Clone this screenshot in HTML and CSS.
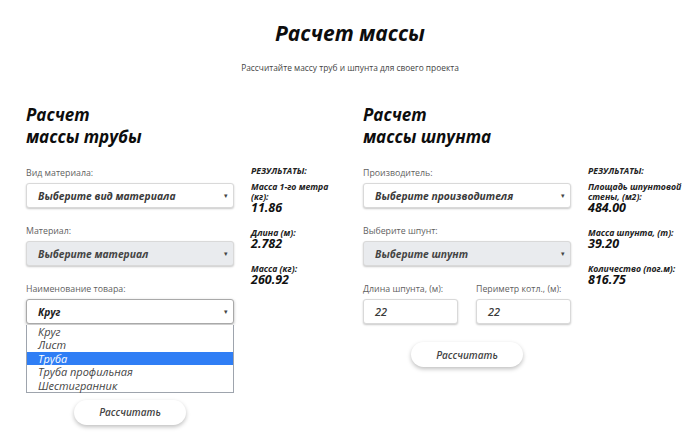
FILE: index.html
```html
<!DOCTYPE html>
<html lang="ru">
<head>
<meta charset="utf-8">
<title>Расчет массы</title>
<link rel="stylesheet" href="styles.css">
</head>
<body>
<header class="hero">
  <h1 class="hero-title">Расчет массы</h1>
  <p class="hero-sub">Рассчитайте массу труб и шпунта для своего проекта</p>
</header>
<main class="calcs">
  <section class="calc">
    <h2 class="calc-title">Расчет<br>массы трубы</h2>
    <div class="calc-body">
      <div class="form">
        <div class="field">
          <div class="label">Вид материала:</div>
          <div class="select"><span>Выберите вид материала</span><i class="arrow">▾</i></div>
        </div>
        <div class="field">
          <div class="label">Материал:</div>
          <div class="select select-disabled"><span>Выберите материал</span><i class="arrow">▾</i></div>
        </div>
        <div class="field field-open">
          <div class="label">Наименование товара:</div>
          <div class="select select-open"><span>Круг</span><i class="arrow">▾</i></div>
          <ul class="options">
            <li>Круг</li>
            <li>Лист</li>
            <li class="active">Труба</li>
            <li>Труба профильная</li>
            <li>Шестигранник</li>
          </ul>
        </div>
        <div class="btn-row"><button class="btn">Рассчитать</button></div>
      </div>
      <div class="results">
        <div class="results-head">РЕЗУЛЬТАТЫ:</div>
        <div class="result">
          <div class="result-name">Масса 1-го метра (кг):</div>
          <div class="result-value">11.86</div>
        </div>
        <div class="result">
          <div class="result-name">Длина (м):</div>
          <div class="result-value">2.782</div>
        </div>
        <div class="result">
          <div class="result-name">Масса (кг):</div>
          <div class="result-value">260.92</div>
        </div>
      </div>
    </div>
  </section>
  <section class="calc">
    <h2 class="calc-title">Расчет<br>массы шпунта</h2>
    <div class="calc-body">
      <div class="form">
        <div class="field">
          <div class="label">Производитель:</div>
          <div class="select"><span>Выберите производителя</span><i class="arrow">▾</i></div>
        </div>
        <div class="field">
          <div class="label">Выберите шпунт:</div>
          <div class="select select-disabled"><span>Выберите шпунт</span><i class="arrow">▾</i></div>
        </div>
        <div class="field-pair">
          <div class="field">
            <div class="label">Длина шпунта, (м):</div>
            <div class="input">22</div>
          </div>
          <div class="field">
            <div class="label">Периметр котл., (м):</div>
            <div class="input">22</div>
          </div>
        </div>
        <div class="btn-row"><button class="btn">Рассчитать</button></div>
      </div>
      <div class="results">
        <div class="results-head">РЕЗУЛЬТАТЫ:</div>
        <div class="result">
          <div class="result-name">Площадь шпунтовой стены, (м2):</div>
          <div class="result-value">484.00</div>
        </div>
        <div class="result">
          <div class="result-name">Масса шпунта, (т):</div>
          <div class="result-value">39.20</div>
        </div>
        <div class="result">
          <div class="result-name">Количество (пог.м):</div>
          <div class="result-value">816.75</div>
        </div>
      </div>
    </div>
  </section>
</main>
</body>
</html>
```
FILE: styles.css
```css
* { box-sizing: border-box; }
html, body { margin: 0; padding: 0; background: #fff; }
body {
  font-family: "Open Sans", "Noto Sans", Arial, sans-serif;
  color: #111;
  width: 700px;
  height: 448px;
  overflow: hidden;
}
.hero { text-align: center; padding-top: 20px; }
.hero-title {
  margin: 0;
  font-size: 21px;
  line-height: 26px;
  font-weight: 700;
  font-style: italic;
  color: #0d0d0d;
}
.hero-sub {
  margin: 16px 0 0;
  font-size: 8.4px;
  line-height: 12px;
  color: #444;
}
.calcs {
  display: grid;
  grid-template-columns: 317px 321px;
  column-gap: 20px;
  padding: 30px 0 0 26px;
}
.calc-title {
  margin: 0;
  font-size: 17px;
  line-height: 22px;
  font-weight: 700;
  font-style: italic;
  color: #0d0d0d;
}
.calc-body {
  display: flex;
  gap: 17px;
  margin-top: 19px;
}
.form { width: 208px; flex: none; }
.field { margin-bottom: 17px; }
.label {
  font-size: 8.8px;
  line-height: 12px;
  color: #5f5f5f;
  margin-bottom: 4px;
  white-space: nowrap;
}
.select, .input {
  height: 25px;
  display: flex;
  align-items: center;
  justify-content: space-between;
  padding: 0 5px 0 11px;
  background: #fff;
  border: 1px solid #d9d9d9;
  border-radius: 3px;
  box-shadow: 0 1px 2px rgba(0,0,0,.22);
  font-size: 10.3px;
  font-weight: 700;
  font-style: italic;
  color: #3a3a3a;
  white-space: nowrap;
}
.select-disabled { background: #e9ebee; color: #444; }
.select-open { border-color: #a9a9a9; color: #222; box-shadow: 0 1px 3px rgba(0,0,0,.3); }
.arrow {
  font-style: normal;
  font-size: 7px;
  color: #444;
  font-weight: 400;
}
.field-open { margin-bottom: 7px; }
.options {
  list-style: none;
  margin: 1px 0 0;
  padding: 0;
  border: 1px solid #9ea4ad;
  border-top: none;
  background: #fff;
}
.options li {
  height: 13.4px;
  line-height: 13.4px;
  padding-left: 11px;
  font-size: 11px;
  font-style: italic;
  color: #444;
}
.options li.active { background: #2f7ef5; color: #fff; }
.field-pair { display: flex; gap: 18px; }
.field-pair .field { width: 95px; margin-bottom: 18px; }
.input { font-weight: 600; font-size: 11px; }
.btn-row { display: flex; justify-content: center; }
.btn {
  width: 112px;
  height: 25px;
  border: none;
  border-radius: 13px;
  background: #fff;
  box-shadow: 0 2px 4px rgba(0,0,0,.25);
  font-family: inherit;
  font-size: 10px;
  font-weight: 600;
  font-style: italic;
  color: #444;
  padding: 0;
}
.results { width: 96px; flex: none; }
.results-head {
  font-size: 8.6px;
  line-height: 10px;
  font-weight: 700;
  font-style: italic;
  color: #222;
  margin-top: -1px;
}
.result { margin-top: 6px; }
.result + .result { margin-top: 14px; }
.result-name {
  font-size: 8.7px;
  line-height: 10px;
  font-weight: 700;
  font-style: italic;
  color: #222;
}
.result-value {
  font-size: 12.5px;
  line-height: 12px;
  font-weight: 700;
  font-style: italic;
  color: #111;
}
```
